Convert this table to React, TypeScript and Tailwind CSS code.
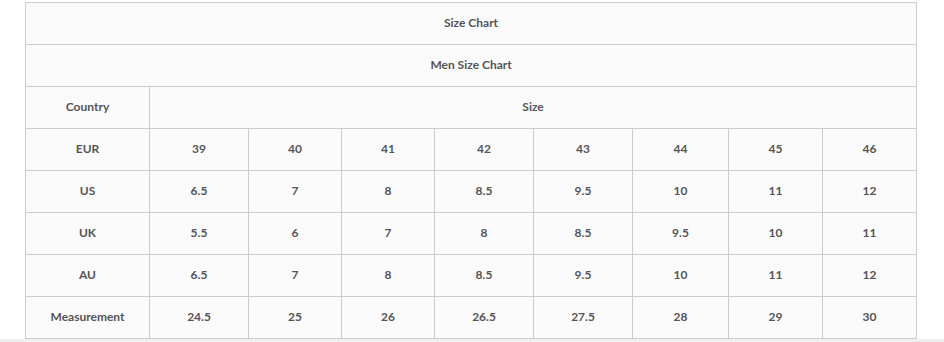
// App.tsx — Men's shoe size chart table

const COLS = [124, 99, 93, 93, 99, 99, 96, 94, 94];

const ROWS: { label: string; values: string[] }[] = [
  { label: "EUR", values: ["39", "40", "41", "42", "43", "44", "45", "46"] },
  { label: "US", values: ["6.5", "7", "8", "8.5", "9.5", "10", "11", "12"] },
  { label: "UK", values: ["5.5", "6", "7", "8", "8.5", "9.5", "10", "11"] },
  { label: "AU", values: ["6.5", "7", "8", "8.5", "9.5", "10", "11", "12"] },
  { label: "Measurement", values: ["24.5", "25", "26", "26.5", "27.5", "28", "29", "30"] },
];

const cell = "h-[42px] border border-[#cccccc] bg-[#fafafa] p-0 pb-[1px] text-center align-middle";

export default function App() {
  return (
    <div className="min-h-[342px] w-[944px] bg-white font-['Lato',sans-serif] text-[12px] font-bold text-[#555555]">
      <div className="pl-[25px] pt-[2px]">
        <table className="w-[892px] table-fixed border-collapse">
          <colgroup>
            {COLS.map((w, i) => (
              <col key={i} style={{ width: w }} />
            ))}
          </colgroup>
          <tbody>
            <tr>
              <td colSpan={9} className={cell}>Size Chart</td>
            </tr>
            <tr>
              <td colSpan={9} className={cell}>Men Size Chart</td>
            </tr>
            <tr>
              <td className={cell}>Country</td>
              <td colSpan={8} className={cell}>Size</td>
            </tr>
            {ROWS.map((r) => (
              <tr key={r.label}>
                <td className={cell}>{r.label}</td>
                {r.values.map((v, i) => (
                  <td key={i} className={cell}>{v}</td>
                ))}
              </tr>
            ))}
          </tbody>
        </table>
      </div>
      <div className="h-[4px] w-full bg-[#f0f0f0]" />
    </div>
  );
}
